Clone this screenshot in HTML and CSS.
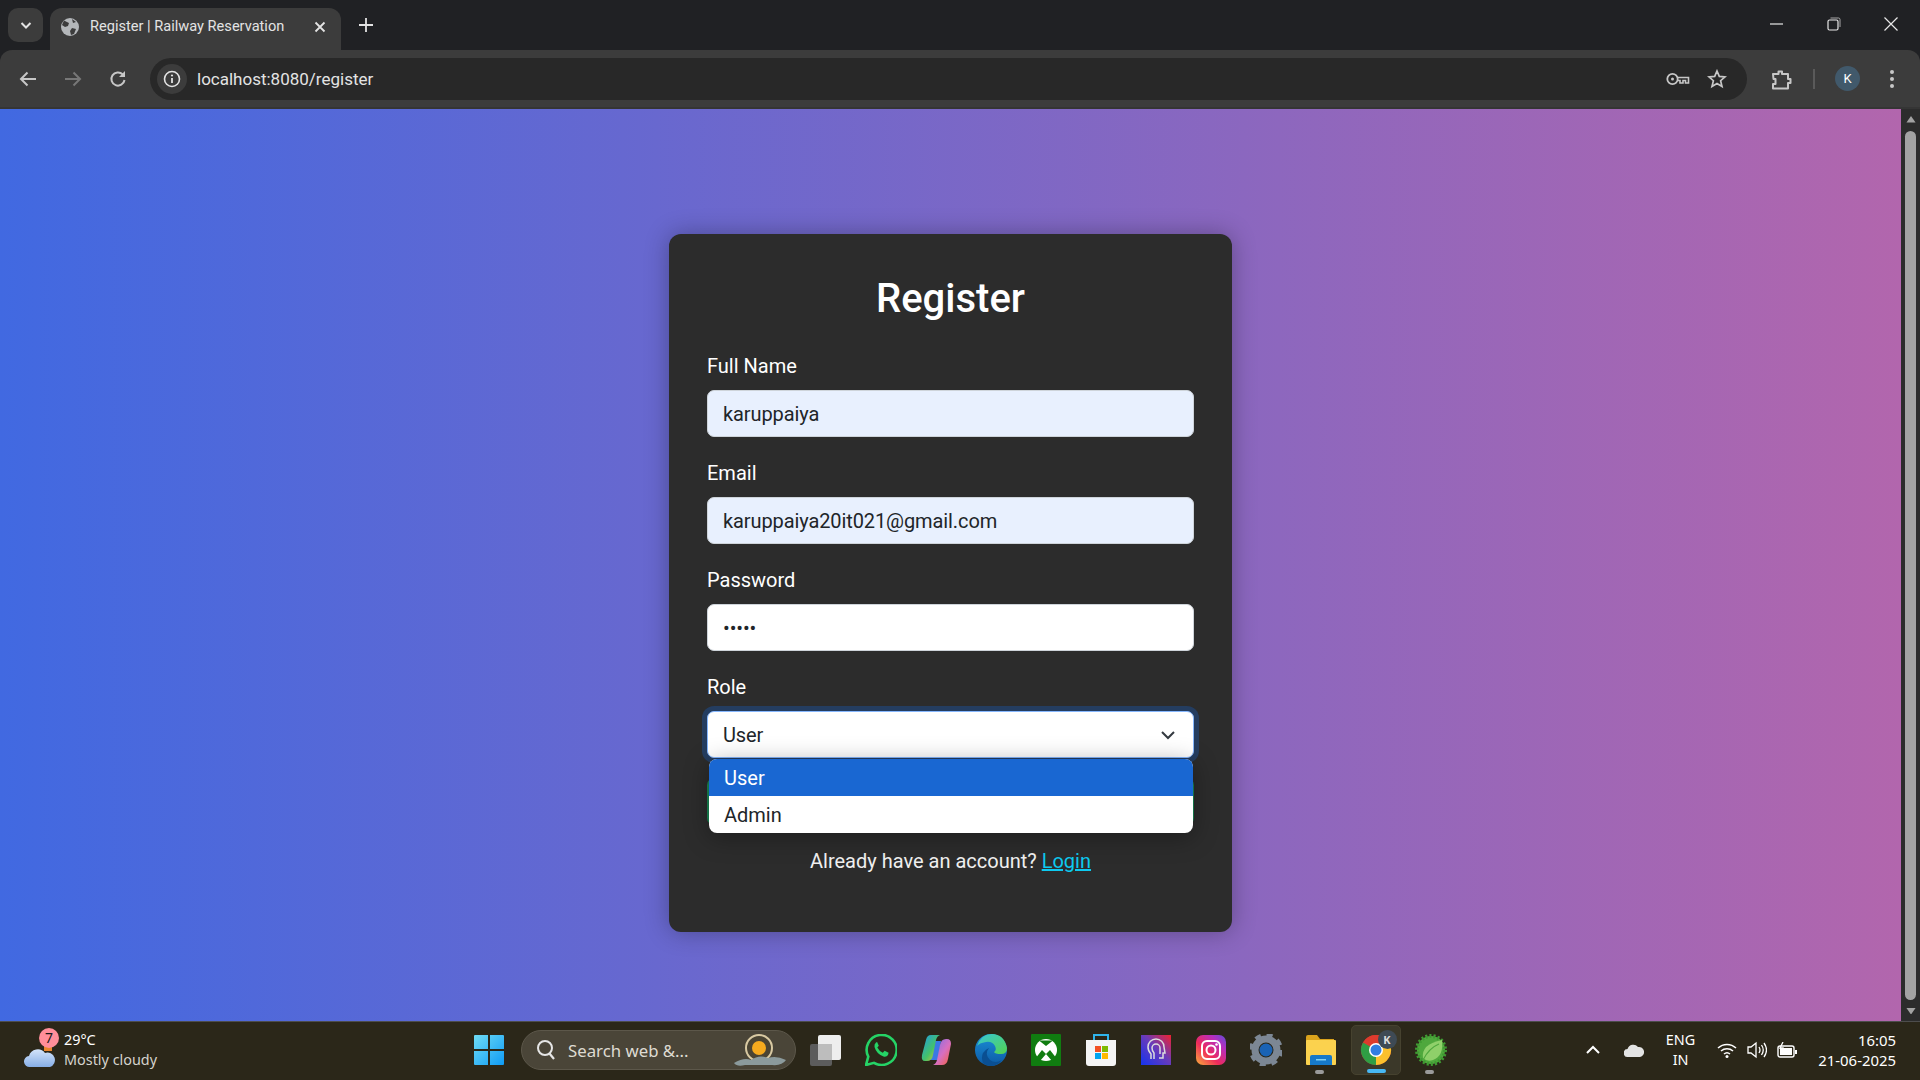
FILE: index.html
```html
<!DOCTYPE html>
<html lang="en">
<head>
  <meta charset="UTF-8" />
  <title>Register | Railway Reservation</title>
  <link rel="stylesheet" href="styles.css">
</head>
<body>

  <!-- Tab strip -->
  <div class="tabstrip">
    <div class="tab-search">
      <svg width="14" height="14" viewBox="0 0 14 14"><path d="M2.5 5 7 9.5 11.5 5" fill="none" stroke="#e3e3e3" stroke-width="2"/></svg>
    </div>
    <div class="tab">
      <svg class="favicon" width="18" height="18" viewBox="0 0 18 18">
        <circle cx="9" cy="9" r="9" fill="#b4b7ba"/>
        <path d="M3 2.5 8 5 7 8 4 9 1 7ZM11 10l4 1-2 5-3 1-1-4ZM11 1l4 3-3 1Z" fill="#3c3c3c"/>
      </svg>
      <span class="tab-title">Register | Railway Reservation</span>
      <svg class="tab-close" width="12" height="12" viewBox="0 0 12 12"><path d="M1.5 1.5l9 9M10.5 1.5l-9 9" stroke="#e3e3e3" stroke-width="1.8"/></svg>
    </div>
    <svg class="new-tab" width="14" height="14" viewBox="0 0 14 14"><path d="M7 0v14M0 7h14" stroke="#e3e3e3" stroke-width="1.8"/></svg>
    <div class="window-btns">
      <svg width="14" height="14" viewBox="0 0 14 14"><path d="M0 7h13" stroke="#e8e8e8" stroke-width="1.2"/></svg>
      <svg width="14" height="14" viewBox="0 0 14 14"><rect x="1" y="3" width="10" height="10" rx="1.5" fill="none" stroke="#e8e8e8" stroke-width="1.2"/><path d="M3.5 1h8a1.5 1.5 0 0 1 1.5 1.5V10" fill="none" stroke="#a8a8a8" stroke-width="1"/></svg>
      <svg width="14" height="14" viewBox="0 0 14 14"><path d="M.5.5l13 13M13.5.5l-13 13" stroke="#e8e8e8" stroke-width="1.2"/></svg>
    </div>
  </div>

  <!-- Toolbar -->
  <div class="toolbar">
    <svg class="nav-icon" width="20" height="20" viewBox="0 0 20 20"><path d="M18 10H3M9.5 3.5 3 10l6.500 6.500" fill="none" stroke="#c7c7c7" stroke-width="2"/></svg>
    <svg class="nav-icon" width="20" height="20" viewBox="0 0 20 20"><path d="M2 10h15M10.500 3.500 17 10l-6.500 6.500" fill="none" stroke="#777" stroke-width="2"/></svg>
    <svg class="nav-icon" width="20" height="20" viewBox="0 0 20 20"><path d="M16.500 11a6.600 6.600 0 1 1-1.800-5.600L16.500 7" fill="none" stroke="#c7c7c7" stroke-width="2"/><path d="M17 2v6h-6z" fill="#c7c7c7"/></svg>
    <div class="omnibox">
      <div class="info-chip">
        <svg width="18" height="18" viewBox="0 0 18 18"><circle cx="9" cy="9" r="7.500" fill="none" stroke="#e3e3e3" stroke-width="1.600"/><path d="M9 8v5" stroke="#e3e3e3" stroke-width="1.800"/><circle cx="9" cy="5.500" r="1.100" fill="#e3e3e3"/></svg>
      </div>
      <span class="url">localhost:8080/register</span>
      <svg class="omni-icon" width="24" height="14" viewBox="0 0 24 14"><circle cx="6.500" cy="7" r="5.200" fill="none" stroke="#c7c7c7" stroke-width="1.800"/><circle cx="6.500" cy="7" r="1.500" fill="#c7c7c7"/><path d="M12 5.500h10.500V11h-3V8.500H17V11h-3V8.500h-2" fill="none" stroke="#c7c7c7" stroke-width="1.600"/></svg>
      <svg class="omni-icon" width="20" height="20" viewBox="0 0 20 20"><path d="M10 2l2.300 5.400 5.700.5-4.400 3.800 1.400 5.700-5-3-5 3 1.400-5.700L2 7.900l5.700-.5z" fill="none" stroke="#c7c7c7" stroke-width="1.700"/></svg>
    </div>
    <svg class="puzzle" width="22" height="22" viewBox="0 0 22 22"><path d="M2 6h5.500V3.500h3.500V6h6v5h2.500v4H17v5.500H2V16h2.500v-5H2.500z" fill="none" stroke="#c7c7c7" stroke-width="2" stroke-linejoin="round"/></svg>
    <div class="toolbar-sep"></div>
    <div class="avatar">K</div>
    <svg class="kebab" width="6" height="20" viewBox="0 0 6 20"><circle cx="3" cy="3" r="2" fill="#c7c7c7"/><circle cx="3" cy="10" r="2" fill="#c7c7c7"/><circle cx="3" cy="17" r="2" fill="#c7c7c7"/></svg>
  </div>

  <!-- Page -->
  <div class="viewport">
    <main class="page">
      <div class="card">
        <h2>Register</h2>
        <form>
          <div class="field">
            <label>Full Name</label>
            <input class="control autofilled" type="text" value="karuppaiya">
          </div>
          <div class="field">
            <label>Email</label>
            <input class="control autofilled" type="email" value="karuppaiya20it021@gmail.com">
          </div>
          <div class="field">
            <label>Password</label>
            <input class="control" type="password" value="12345">
          </div>
          <div class="field select-field">
            <label>Role</label>
            <div class="select-wrap">
              <div class="control select-box">User</div>
              <svg class="select-arrow" width="16" height="16" viewBox="0 0 16 16"><path d="M2 5l6 6 6-6" fill="none" stroke="#343a40" stroke-width="2"/></svg>
              <div class="select-popup">
                <div class="option selected">User</div>
                <div class="option">Admin</div>
              </div>
            </div>
          </div>
          <button class="submit" type="button">Register</button>
        </form>
        <p class="login-line">Already have an account? <a href="#">Login</a></p>
      </div>
    </main>
    <div class="scrollbar">
      <svg width="14" height="10" viewBox="0 0 14 10"><path d="M7 0l7 10H0z" fill="#a3a3a3"/></svg>
      <div class="scroll-track"><div class="scroll-thumb"></div></div>
      <svg width="14" height="10" viewBox="0 0 14 10"><path d="M7 10 14 0H0z" fill="#a3a3a3"/></svg>
    </div>
  </div>

  <!-- Taskbar -->
  <div class="taskbar">
    <div class="weather">
      <svg class="weather-icon" width="32" height="26" viewBox="0 0 32 26">
        <defs><linearGradient id="cloud" x1="0" y1="0" x2="0" y2="1"><stop offset="0" stop-color="#d4e4fa"/><stop offset="1" stop-color="#86aee6"/></linearGradient></defs>
        <rect x="20" y="0" width="8" height="9" fill="#e8852c"/>
        <path d="M6 25a5.500 5.500 0 0 1-1-11 9 9 0 0 1 16-3 7 7 0 0 1 5 14z" fill="url(#cloud)"/>
      </svg>
      <span class="weather-badge">7</span>
      <div class="weather-text">
        <div class="temp">29°C</div>
        <div class="cond">Mostly cloudy</div>
      </div>
    </div>

    <div class="task-center">
      <div class="slot start">
        <svg width="30" height="30" viewBox="0 0 30 30">
          <defs><linearGradient id="win" x1="0" y1="0" x2="1" y2="1"><stop offset="0" stop-color="#6fdcf5"/><stop offset="1" stop-color="#0f9bf5"/></linearGradient></defs>
          <path d="M0 1a1 1 0 0 1 1-1h13v14H0zM16 0h13a1 1 0 0 1 1 1v13H16zM0 16h14v14H1a1 1 0 0 1-1-1zM16 16h14v13a1 1 0 0 1-1 1H16z" fill="url(#win)"/>
        </svg>
      </div>
      <div class="searchbox">
        <svg width="20" height="22" viewBox="0 0 20 22"><circle cx="9" cy="9" r="7" fill="none" stroke="#e6e6e6" stroke-width="2"/><path d="M13.500 14.500 18 20" stroke="#e6e6e6" stroke-width="2.200"/></svg>
        <span>Search web &amp;...</span>
        <svg class="search-art" width="54" height="34" viewBox="0 0 54 34">
          <circle cx="26" cy="15" r="13" fill="#4a4433" stroke="#d8c9a2" stroke-width="2"/>
          <circle cx="26" cy="15" r="7" fill="#f5aa1e"/>
          <path d="M1 30q10-6 17-3 8-6 17-2 8-3 18 2-4 6-14 5H12Q4 34 1 30z" fill="#8b9a9c"/>
        </svg>
      </div>
      <div class="slot">
        <svg width="32" height="32" viewBox="0 0 32 32"><rect x="0" y="10" width="22" height="22" rx="2" fill="#5c5c5c"/><rect x="8" y="1" width="23" height="25" rx="2" fill="#eee"/><rect x="8" y="10" width="14" height="16" fill="#bdbdbd"/></svg>
      </div>
      <div class="slot">
        <svg width="32" height="32" viewBox="0 0 32 32"><path d="M1 31l2.300-8.300A15 15 0 1 1 9 28.800z" fill="none" stroke="#25d366" stroke-width="2.600"/><path d="M11 8.500q-2 1.500-1.500 4.500 2 7 9 9.500 3 .8 4.500-1.500l.6-2.200-4-2-1.800 2q-3.500-1.500-5.500-5.300l1.500-1.700-1.700-3.800z" fill="#25d366"/></svg>
      </div>
      <div class="slot">
        <svg width="30" height="32" viewBox="0 0 30 32">
          <defs>
            <linearGradient id="cop1" x1="0" y1="0" x2="1" y2="1"><stop offset="0" stop-color="#1e9be8"/><stop offset=".55" stop-color="#44c26a"/><stop offset="1" stop-color="#f5c52a"/></linearGradient>
            <linearGradient id="cop2" x1="0" y1="0" x2="1" y2="1"><stop offset="0" stop-color="#7a6ee8"/><stop offset=".55" stop-color="#d86fc0"/><stop offset="1" stop-color="#f5603c"/></linearGradient>
          </defs>
          <path d="M12 7h8l-3 19h-8z" fill="#3a78e4"/>
          <path d="M10 1h9q-3 1-4 5l-3 15q-1 6-6 6H4Q0 27 1 21L5 6q1-5 5-5z" fill="url(#cop1)"/>
          <path d="M21 31h-9q3-1 4-5l3-15q1-6 6-6h1q4 0 4 5l-3 15q-1 6-6 6z" fill="url(#cop2)"/>
        </svg>
      </div>
      <div class="slot">
        <svg width="32" height="32" viewBox="0 0 32 32">
          <defs>
            <linearGradient id="edge1" x1="0" y1="0" x2="1" y2="1"><stop offset="0" stop-color="#38c6d6"/><stop offset="1" stop-color="#52d34f"/></linearGradient>
            <linearGradient id="edge2" x1="0" y1="0" x2="0" y2="1"><stop offset="0" stop-color="#1b8fd8"/><stop offset="1" stop-color="#0c59a4"/></linearGradient>
          </defs>
          <circle cx="16" cy="16" r="16" fill="url(#edge2)"/>
          <path d="M2 12Q6 0 17 0q12 0 15 14 0 6-6 6-6 0-7-2 3-2 1-6-3-5-9-4-7 1-9 4z" fill="url(#edge1)"/>
          <path d="M14 14q-5 6 1 12 5 4 12 0-5 6-12 6-4 0-7-3-2-6 0-10 3-4 6-5z" fill="#0a4f92"/>
        </svg>
      </div>
      <div class="slot">
        <svg width="30" height="32" viewBox="0 0 30 32"><rect width="30" height="32" rx="1" fill="#107c10"/><circle cx="15" cy="16" r="11" fill="#fff"/><path d="M15 12 8 6.500h14zM11 16l-7 9 5 2 6-7zM19 16l7 9-5 2-6-7z" fill="#107c10"/></svg>
      </div>
      <div class="slot">
        <svg width="30" height="32" viewBox="0 0 30 32"><path d="M8 6V1h14v5" fill="none" stroke="#2fb4ea" stroke-width="2"/><path d="M0 6h30v23a3 3 0 0 1-3 3H3a3 3 0 0 1-3-3z" fill="#f4f4f4"/><rect x="9" y="12" width="6" height="6" fill="#f25022"/><rect x="16" y="12" width="6" height="6" fill="#7fba00"/><rect x="9" y="19" width="6" height="6" fill="#00a4ef"/><rect x="16" y="19" width="6" height="6" fill="#ffb900"/></svg>
      </div>
      <div class="slot">
        <svg width="30" height="30" viewBox="0 0 30 30">
          <defs><linearGradient id="hex" x1="0" y1="1" x2="1" y2="0"><stop offset="0" stop-color="#1434f0"/><stop offset=".55" stop-color="#6b3bb8"/><stop offset="1" stop-color="#f0222e"/></linearGradient></defs>
          <rect width="30" height="30" fill="url(#hex)"/>
          <path d="M10 24v-5q-3-3-3-7a8 8 0 0 1 16 0l1 6h-2v5h-4" fill="none" stroke="#ddd" stroke-width="1.500"/>
          <path d="M13 24v-6q-2-2-2-5a4 4 0 0 1 8 0v6" fill="none" stroke="#ddd" stroke-width="1.500"/>
        </svg>
      </div>
      <div class="slot">
        <svg width="30" height="30" viewBox="0 0 30 30">
          <defs><linearGradient id="insta" x1="0" y1="1" x2="1" y2="0"><stop offset="0" stop-color="#fbb03b"/><stop offset=".4" stop-color="#ee2a5b"/><stop offset=".75" stop-color="#b62ec0"/><stop offset="1" stop-color="#5b4fd6"/></linearGradient></defs>
          <rect width="30" height="30" rx="7" fill="url(#insta)"/>
          <rect x="6" y="6" width="18" height="18" rx="5" fill="none" stroke="#fff" stroke-width="2"/>
          <circle cx="15" cy="15" r="4.500" fill="none" stroke="#fff" stroke-width="2"/>
          <circle cx="20.500" cy="9.500" r="1.300" fill="#fff"/>
        </svg>
      </div>
      <div class="slot">
        <svg width="32" height="32" viewBox="0 0 32 32"><circle cx="16" cy="16" r="11" fill="none" stroke="#7c8794" stroke-width="7"/><circle cx="16" cy="16" r="15" fill="none" stroke="#7c8794" stroke-width="4" stroke-dasharray="6 5.800"/><circle cx="16" cy="16" r="6.500" fill="#1a63b5"/></svg>
      </div>
      <div class="slot has-dot">
        <svg width="30" height="30" viewBox="0 0 30 30"><path d="M0 2a2 2 0 0 1 2-2h9l3 4h14v5H0z" fill="#dba31c"/><rect y="5" width="30" height="25" rx="1" fill="#fbd24e"/><path d="M4 22a2 2 0 0 1 2-2h18a2 2 0 0 1 2 2v8H4z" fill="#1679c9"/><rect x="10" y="24" width="10" height="1.500" fill="#7fd0f5"/></svg>
        <span class="run-dot"></span>
      </div>
      <div class="slot active">
        <svg width="32" height="32" viewBox="0 0 32 32">
          <circle cx="16" cy="16" r="15" fill="#dd3b2d"/>
          <path d="M16 16 29 8.500A15 15 0 0 1 16 31z" fill="#fbc02d"/>
          <path d="M16 16v15A15 15 0 0 1 3 8.500z" fill="#2f9e44"/>
          <path d="M3 8.500A15 15 0 0 1 29 8.500H16z" fill="#dd3b2d"/>
          <circle cx="16" cy="16" r="7" fill="#fff"/>
          <circle cx="16" cy="16" r="5.500" fill="#2f7de1"/>
        </svg>
        <span class="chrome-badge">K</span>
        <span class="run-bar"></span>
      </div>
      <div class="slot has-dot">
        <svg width="32" height="32" viewBox="0 0 32 32"><circle cx="16" cy="16" r="14" fill="#4fa83d" stroke="#3f9a32" stroke-width="4" stroke-dasharray="2 2"/><path d="M8 24Q6 10 27 6q2 16-9 20-6 2-10-2z" fill="#8fd06a"/><path d="M8 26Q14 14 24 10" fill="none" stroke="#4fa83d" stroke-width="1.200"/></svg>
        <span class="run-dot"></span>
      </div>
    </div>

    <div class="tray">
      <svg class="tray-chevron" width="14" height="10" viewBox="0 0 14 10"><path d="M1 8l6-6 6 6" fill="none" stroke="#fff" stroke-width="2"/></svg>
      <svg class="tray-cloud" width="20" height="14" viewBox="0 0 20 14"><path d="M4 14a4 4 0 0 1-.5-8A6 6 0 0 1 14 4a5 5 0 0 1 2 10z" fill="#e4e4e4"/></svg>
      <div class="lang"><div>ENG</div><div>IN</div></div>
      <svg width="20" height="16" viewBox="0 0 20 16"><path d="M1 6a13 13 0 0 1 18 0M4 9a9 9 0 0 1 12 0M7 12a4.500 4.500 0 0 1 6 0" fill="none" stroke="#fff" stroke-width="1.500"/><circle cx="10" cy="14.500" r="1.500" fill="#fff"/></svg>
      <svg width="20" height="18" viewBox="0 0 20 18"><path d="M1 6h3l5-4v14l-5-4H1z" fill="none" stroke="#fff" stroke-width="1.300"/><path d="M12 6q2 3 0 6M14.500 4q3.500 5 0 10M17 2q5 7 0 14" fill="none" stroke="#fff" stroke-width="1.300"/></svg>
      <svg width="20" height="16" viewBox="0 0 20 16"><rect x="1" y="4" width="16" height="11" rx="2" fill="none" stroke="#fff" stroke-width="1.400"/><rect x="3" y="6" width="12" height="7" fill="#fff"/><rect x="18" y="8" width="2" height="4" fill="#fff"/><path d="M6 0 3 6h3l-1 4" fill="none" stroke="#fff" stroke-width="1.300"/></svg>
      <div class="clock"><div>16:05</div><div>21-06-2025</div></div>
    </div>
  </div>

</body>
</html>
```

FILE: styles.css
```css
* {
  margin: 0; padding: 0; box-sizing: border-box;
}
html, body {
  height: 100%;
  overflow: hidden;
}
body {
  display: flex;
  flex-direction: column;
  font-family: Roboto, "Noto Sans", sans-serif;
  background: #202124;
}

/* Tab strip */
.tabstrip {
  height: 50px;
  background: #202124;
  display: flex;
  align-items: flex-end;
  padding-left: 8px;
}
.tab-search {
  width: 35px;
  height: 34px;
  margin-bottom: 8px;
  margin-right: 7px;
  background: #3c3c3c;
  border-radius: 10px;
  display: flex;
  align-items: center;
  justify-content: center;
}
.tab {
  width: 291px;
  height: 42px;
  background: #3c3c3c;
  border-radius: 12px 12px 0 0;
  display: flex;
  align-items: center;
  padding: 0 15px 4px 11px;
}
.tab-title {
  flex: 1;
  margin: 0 0 2px 11px;
  font-size: 14.600px;
  color: #e3e3e3;
  white-space: nowrap;
}
.new-tab {
  margin: 0 0 18px 18px;
}
.window-btns {
  margin-left: auto;
  height: 50px;
  display: flex;
  align-items: center;
  gap: 43px;
  padding: 0 22px 3px 0;
}

/* Toolbar */
.toolbar {
  height: 59px;
  background: #3c3c3c;
  border-bottom: 2px solid #353535;
  border-radius: 12px 12px 0 0;
  display: flex;
  align-items: center;
  padding: 0 14px 0 18px;
}
.nav-icon {
  margin-right: 25px;
}
.nav-icon:nth-child(3) {
  margin-right: 22px;
}
.omnibox {
  width: 1597px;
  height: 42px;
  background: #282828;
  border-radius: 21px;
  display: flex;
  align-items: center;
  padding: 0 20px 0 7px;
}
.info-chip {
  width: 30px;
  height: 30px;
  border-radius: 50%;
  background: #3c3c3c;
  display: flex;
  align-items: center;
  justify-content: center;
}
.url {
  flex: 1;
  margin-left: 10px;
  font-size: 17px;
  color: #e3e3e3;
}
.omni-icon {
  margin-left: 17px;
}
.puzzle {
  margin-left: 24px;
}
.toolbar-sep {
  width: 2px;
  height: 20px;
  background: #5a5a5a;
  margin: 0 20px 0 20px;
}
.avatar {
  width: 25px;
  height: 25px;
  border-radius: 50%;
  background: #41596b;
  color: #fff;
  font-size: 13px;
  display: flex;
  align-items: center;
  justify-content: center;
}
.kebab {
  margin-left: 29px;
}

/* Page */
.viewport {
  flex: 1;
  display: flex;
  min-height: 0;
}
.page {
  flex: 1;
  background: linear-gradient(to right, #4169e1, #b266ad);
  display: flex;
  justify-content: center;
  padding-top: 125px;
}
.card {
  width: 563px;
  height: 698px;
  background: #2c2c2c;
  border-radius: 12px;
  padding: 41px 38px 0;
  box-shadow: 0 0 25px rgba(0, 0, 0, 0.3);
  color: #fff;
}
h2 {
  font-size: 40px;
  font-weight: 500;
  line-height: 48px;
  text-align: center;
  margin-bottom: 27px;
}
.field {
  margin-bottom: 20px;
}
label {
  display: block;
  font-size: 20px;
  line-height: 30px;
  padding-top: 1px;
  margin-bottom: 9px;
}
.control {
  display: block;
  width: 100%;
  height: 47px;
  background: #fff;
  border: 1px solid #ced4da;
  border-radius: 7px;
  padding: 0 15px;
  font-family: inherit;
  font-size: 20px;
  line-height: 45px;
  letter-spacing: -0.1px;
  color: #212529;
}
.autofilled {
  background: #e8f0fe;
}
.select-wrap {
  position: relative;
}
.select-box {
  line-height: 47px;
  border-color: #86b7fe;
  box-shadow: 0 0 0 5px rgba(13, 110, 253, 0.25);
}
.select-arrow {
  position: absolute;
  right: 18px;
  top: 16px;
}
.select-popup {
  position: absolute;
  left: 2px;
  right: 1px;
  top: 48px;
  background: #fff;
  border-radius: 8px;
  overflow: hidden;
  box-shadow: 0 4px 24px rgba(0, 0, 0, 0.35);
}
.option {
  height: 37px;
  padding: 1px 0 0 15px;
  font-size: 20px;
  line-height: 37px;
  color: #212529;
}
.option.selected {
  background: #1967d2;
  color: #fff;
}
.submit {
  display: block;
  width: 100%;
  height: 47px;
  background: #198754;
  color: #fff;
  border: none;
  border-radius: 7px;
  font-family: inherit;
  font-size: 20px;
}
.login-line {
  margin-top: 21px;
  font-size: 20px;
  line-height: 30px;
  text-align: center;
  color: #f0f0f0;
}
.login-line a {
  color: #0dcaf0;
}

/* Scrollbar */
.scrollbar {
  width: 19px;
  background: #2c2c2c;
  display: flex;
  flex-direction: column;
  align-items: center;
  padding: 7px 0;
}
.scroll-track {
  flex: 1;
  width: 100%;
  padding: 8px 2px;
}
.scroll-thumb {
  width: 11px;
  margin: 0 auto;
  height: 869px;
  background: #a3a3a3;
  border-radius: 6px;
}

/* Taskbar */
.taskbar {
  height: 59px;
  background: #2b2719;
  border-top: 1px solid #4d4d4d;
  padding-bottom: 2px;
  display: grid;
  grid-template-columns: 474px auto 1fr;
  align-items: center;
  color: #fff;
  font-family: "Noto Sans", sans-serif;
}
.weather {
  position: relative;
  display: flex;
  align-items: center;
  padding-left: 24px;
}
.weather-icon {
  margin-top: 10px;
}
.weather-badge {
  position: absolute;
  left: 39px;
  top: -2px;
  width: 20px;
  height: 20px;
  border-radius: 50%;
  background: #ff8e99;
  color: #1a1a1a;
  font-size: 14px;
  line-height: 20px;
  text-align: center;
}
.weather-text {
  margin-left: 8px;
  font-size: 14.400px;
  line-height: 20px;
}
.cond {
  color: #d5d3cd;
}
.task-center {
  display: flex;
  align-items: center;
}
.slot {
  position: relative;
  width: 50px;
  height: 50px;
  margin: 0 2.500px;
  border-radius: 5px;
  display: flex;
  align-items: center;
  justify-content: center;
}
.slot.start {
  width: 30px;
  margin: 0 17px 0 0;
}
.searchbox {
  width: 275px;
  height: 40px;
  margin-right: 2px;
  background: #4a4538;
  border: 1px solid #5c574a;
  border-radius: 20px;
  display: flex;
  align-items: center;
  padding-left: 14px;
  font-size: 16.800px;
  color: #dedbd2;
}
.searchbox span {
  flex: 1;
  margin-left: 12px;
}
.search-art {
  margin-right: 8px;
}
.slot.active {
  background: #3b3829;
  border: 1px solid #46422f;
}
.run-dot {
  position: absolute;
  bottom: 1px;
  left: 19px;
  width: 9px;
  height: 4px;
  border-radius: 2px;
  background: #9a9a9a;
}
.run-bar {
  position: absolute;
  bottom: 1px;
  left: 15px;
  width: 19px;
  height: 4px;
  border-radius: 2px;
  background: #47b8f5;
}
.chrome-badge {
  position: absolute;
  top: 4px;
  right: 3px;
  width: 19px;
  height: 19px;
  border-radius: 50%;
  background: #3e4a55;
  color: #dcdcdc;
  font-size: 11px;
  font-weight: 700;
  line-height: 19px;
  text-align: center;
}
.tray {
  display: flex;
  align-items: center;
  justify-content: flex-end;
  padding-right: 24px;
  font-size: 14.400px;
  line-height: 20px;
}
.tray svg {
  margin-left: 10px;
}
.tray .tray-chevron {
  margin-right: 14px;
}
.tray .tray-cloud {
  margin-right: 22px;
}
.lang {
  text-align: center;
  margin-right: 12px;
}
.clock {
  margin-left: 21px;
  font-size: 14.900px;
  text-align: right;
}
```
